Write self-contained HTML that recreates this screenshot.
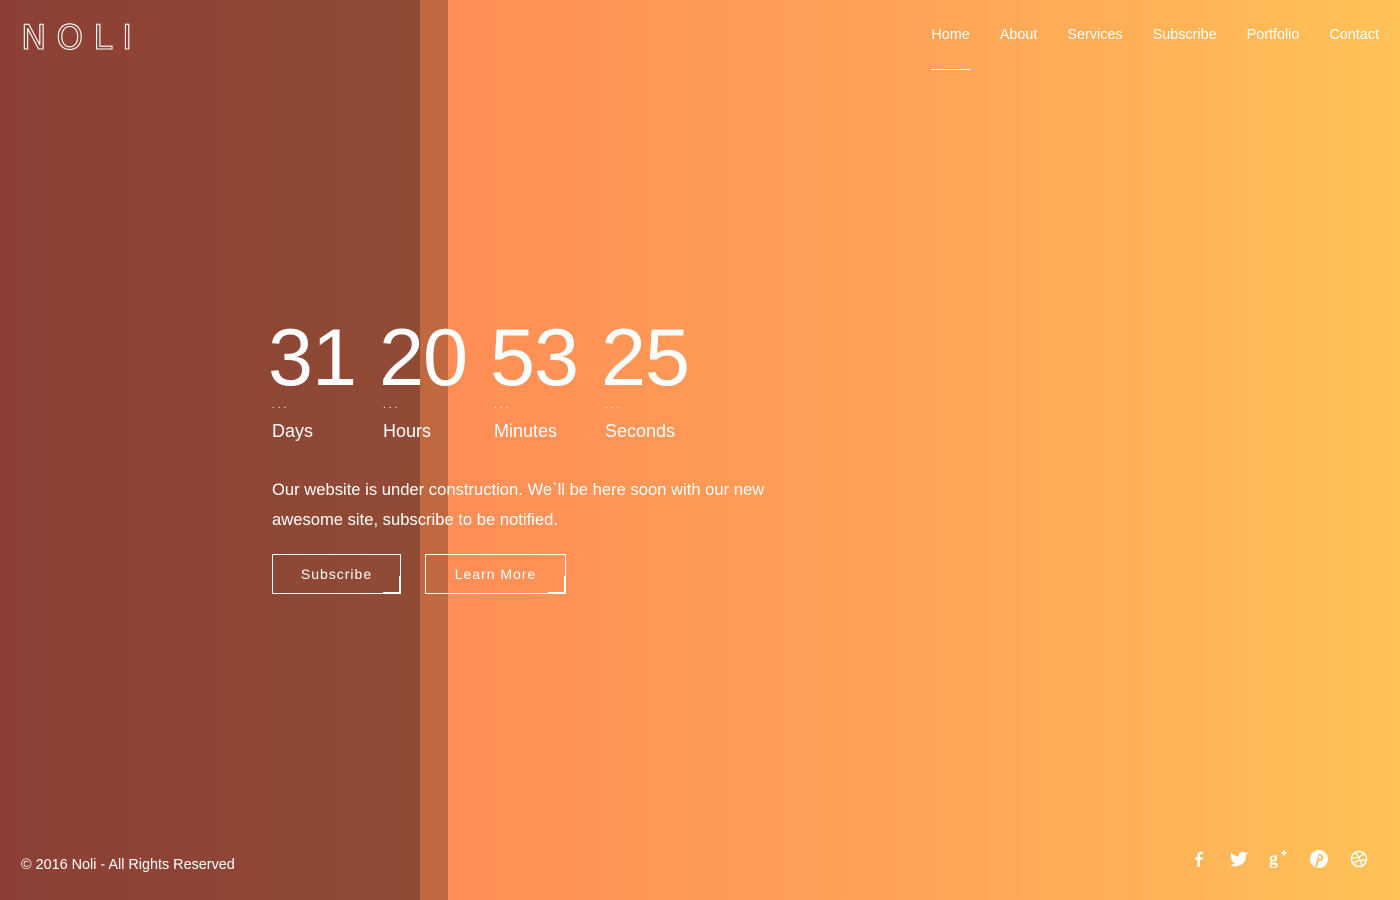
<!DOCTYPE html>
<html><head><meta charset="utf-8"><style>
*{margin:0;padding:0;box-sizing:border-box}
body{width:1400px;height:900px;overflow:hidden;position:relative;font-family:"Liberation Sans",sans-serif;color:#fff;
background:linear-gradient(90deg,#ff8a55 0px,#ff8d56 448px,#ffa857 1000px,#ffc257 1400px)}
.l1{position:absolute;left:0;top:0;width:420px;height:900px;background:linear-gradient(90deg,#8d3f35,#904b35)}
.l2{position:absolute;left:420px;top:0;width:28px;height:900px;background:#c0683f}
.logo{position:absolute;left:21px;top:18px;font-family:'DejaVu Sans',sans-serif;font-size:34px;letter-spacing:10px;color:transparent;-webkit-text-stroke:1.1px #fff}
nav{position:absolute;top:27px;right:21px;display:flex;font-size:14.4px}
nav a{color:#fff;text-decoration:none;margin-left:30px;position:relative;display:block;height:43px}
nav a.act:after{content:"";position:absolute;left:0;right:0;top:42px;height:1px;background:#fff}
.cd{position:absolute;left:268px;top:313px;display:flex}
.u{width:111px}
.n{font-size:81px;line-height:90px;letter-spacing:-1px}
.d{font-size:10px;letter-spacing:3px;margin-left:4px;line-height:6px;height:6px;overflow:hidden}
.lb{font-size:18px;margin-left:4px;margin-top:12px}
p{position:absolute;left:272px;top:475px;font-size:16.6px;line-height:30px;width:560px}
.b{position:absolute;top:554px;height:40px;border:1px solid #fff;font-size:14px;letter-spacing:1px;text-align:center;line-height:38px}
.b:before{content:"";position:absolute;right:-1px;bottom:-1px;width:16px;height:16px;border-bottom:2px solid #fff;border-right:2px solid #fff}
.f{position:absolute;left:21px;top:857px;font-size:14.4px}
.s{position:absolute;top:849px;left:1189px;display:flex;gap:20px}
.s svg{width:20px;height:20px}
</style></head><body>
<div class="l1"></div><div class="l2"></div>
<div class="logo">NOLI</div>
<nav><a class="act" href="#">Home</a><a href="#">About</a><a href="#">Services</a><a href="#">Subscribe</a><a href="#">Portfolio</a><a href="#">Contact</a></nav>
<div class="cd">
<div class="u"><div class="n">31</div><div class="d">...</div><div class="lb">Days</div></div>
<div class="u"><div class="n">20</div><div class="d">...</div><div class="lb">Hours</div></div>
<div class="u"><div class="n">53</div><div class="d">...</div><div class="lb">Minutes</div></div>
<div class="u"><div class="n">25</div><div class="d">...</div><div class="lb">Seconds</div></div>
</div>
<p>Our website is under construction. We`ll be here soon with our new awesome site, subscribe to be notified.</p>
<div class="b" style="left:272px;width:129px">Subscribe</div>
<div class="b" style="left:425px;width:141px">Learn More</div>
<div class="f">© 2016 Noli - All Rights Reserved</div>
<div class="s">
<svg viewBox="0 0 20 20"><path d="M11 18V11h2.3l.4-2.7H11V6.6c0-.8.3-1.3 1.4-1.3h1.4V2.9c-.3 0-1.1-.1-2-.1-2 0-3.3 1.2-3.3 3.4v2.1H6.2V11h2.3v7z" fill="#fff"/></svg>
<svg viewBox="0 0 20 20"><path d="M19 4.5c-.7.3-1.4.5-2.1.6.8-.5 1.3-1.2 1.6-2-.7.4-1.5.7-2.3.9a3.7 3.7 0 0 0-6.3 3.4C6.8 7.2 4.1 5.8 2.3 3.5c-1 1.7-.5 3.8 1.1 4.9-.6 0-1.2-.2-1.7-.5 0 1.8 1.3 3.3 3 3.7-.5.2-1.1.2-1.7.1.5 1.5 1.9 2.5 3.5 2.6A7.4 7.4 0 0 1 1 15.8 10.5 10.5 0 0 0 17 6.5v-.5c.8-.4 1.5-1 2-1.5z" fill="#fff"/></svg>
<svg viewBox="0 0 20 20"><text x="0" y="15" font-size="18" font-weight="bold" fill="#fff" font-family="Liberation Serif">g</text><path d="M12.5 4h5M15 1.5v5" stroke="#fff" stroke-width="1.8"/></svg>
<svg viewBox="0 0 20 20"><circle cx="10" cy="10" r="9" fill="#fff"/><path d="M9.3 6.2c2.8-.6 4.2 1 3.8 3-.4 2-2.300 2.600-3.2 1.5M9.6 8l-2.3 10" stroke="#ffb957" stroke-width="1.7" fill="none"/></svg>
<svg viewBox="0 0 20 20"><circle cx="10" cy="10" r="7.5" fill="none" stroke="#fff" stroke-width="1.6"/><path d="M6 3.5c3 3 6 8 7 13.5M2.6 9c4 .5 9-1 12.5-4.5M4 15c2.5-3 7-4.5 13.5-3.5" stroke="#fff" stroke-width="1.3" fill="none"/></svg>
</div>
</body></html>
